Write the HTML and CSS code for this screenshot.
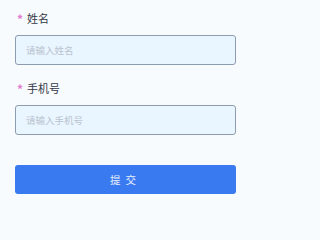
FILE: index.html
```html
<!DOCTYPE html>
<html lang="zh">
<head>
<meta charset="utf-8">
<link rel="stylesheet" href="styles.css">
</head>
<body>
<form class="form">
  <div class="field">
    <label class="label"><span class="req">*</span>姓名</label>
    <input class="input" type="text" placeholder="请输入姓名">
  </div>
  <div class="field">
    <label class="label"><span class="req">*</span>手机号</label>
    <input class="input" type="text" placeholder="请输入手机号">
  </div>
  <button class="submit" type="button">提交</button>
</form>
</body>
</html>
```
FILE: styles.css
```css
html, body {
  margin: 0;
  padding: 0;
  background: #f8fbfe;
}
body {
  font-family: "Noto Sans CJK SC", "Noto Sans", sans-serif;
}
.form {
  box-sizing: border-box;
  width: 251px;
  display: flex;
  flex-direction: column;
  gap: 16px;
  padding: 11px 15px 0 15px;
}
.field {
  display: flex;
  flex-direction: column;
  gap: 10px;
}
.label {
  display: flex;
  align-items: center;
  height: 14px;
  font-size: 11px;
  line-height: 14px;
  color: #323846;
  padding-left: 2px;
}
.req {
  color: #e07ad0;
  font-size: 12px;
  font-weight: bold;
  margin-right: 4px;
  padding-top: 2px;
}
.input {
  box-sizing: border-box;
  width: 100%;
  height: 30px;
  margin: 0;
  border: 1px solid #8e9cb0;
  border-radius: 3px;
  background: #e9f5ff;
  padding: 0 10px;
  font-family: inherit;
  font-size: 9.5px;
  color: #333;
  outline: none;
}
.input::placeholder {
  color: #b9c4cf;
}
.submit {
  box-sizing: border-box;
  margin-top: 14px;
  width: 100%;
  height: 29px;
  border: none;
  border-radius: 3px;
  background: #3a7af0;
  color: #e8f0ff;
  font-family: inherit;
  font-size: 10.5px;
  letter-spacing: 5px;
  padding: 0;
}
```
